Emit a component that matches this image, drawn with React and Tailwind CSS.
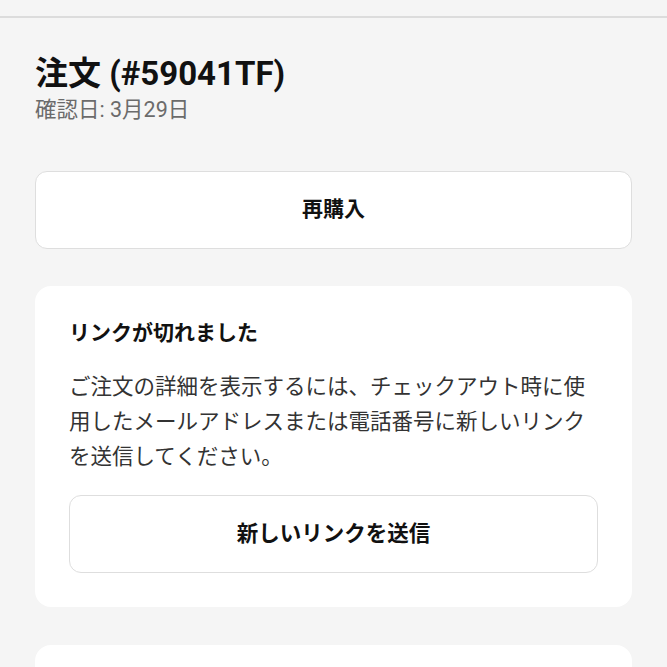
export default function App() {
  return (
    <div
      className="min-h-[667px] bg-[#f5f5f5] text-[#111]"
      style={{ fontFamily: 'Roboto, "Noto Sans CJK JP", sans-serif' }}
    >
      {/* 上部バー */}
      <div className="h-[18px] border-b-2 border-[#dcdcdc] bg-[#f5f5f5]" />

      <div className="px-[35px] pt-[36px]">
        {/* 注文ヘッダー */}
        <h1 className="text-[33px] font-bold leading-[40px]">注文 (#59041TF)</h1>
        <p className="mt-[1px] text-[21.5px] leading-[30px] text-[#6b6b6b]">確認日: 3月29日</p>

        {/* 再購入ボタン */}
        <button className="mt-[46px] flex h-[78px] w-full items-center justify-center rounded-[12px] border border-[#dedede] bg-white text-[21px] font-bold">
          再購入
        </button>

        {/* リンク切れカード */}
        <div className="mt-[37px] rounded-[16px] bg-white px-[34px] pt-[31px] pb-[34px]">
          <h2 className="text-[21px] font-bold leading-[32px]">リンクが切れました</h2>
          <p className="mt-[20px] text-[21.5px] leading-[35px] text-[#333]">
            ご注文の詳細を表示するには、チェックアウト時に使用したメールアドレスまたは電話番号に新しいリンクを送信してください。
          </p>
          <button className="mt-[21px] flex h-[78px] w-full items-center justify-center rounded-[12px] border border-[#dedede] bg-white text-[21.5px] font-bold">
            新しいリンクを送信
          </button>
        </div>

        {/* 次のカード */}
        <div className="mt-[38px] h-[22px] rounded-t-[16px] bg-white" />
      </div>
    </div>
  );
}
